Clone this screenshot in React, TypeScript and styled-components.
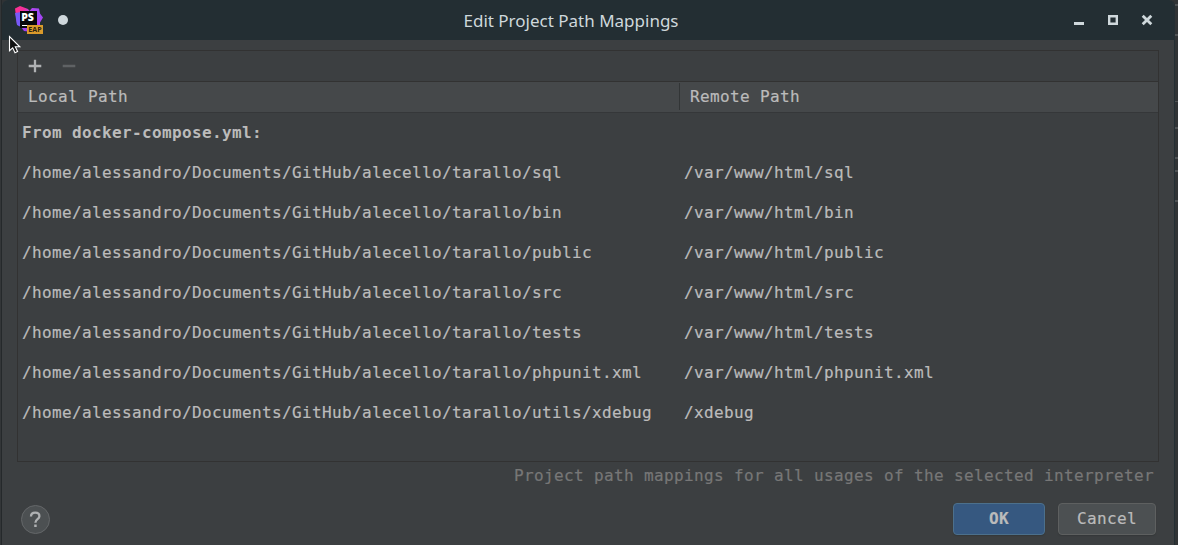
import React from "react";
import styled, { createGlobalStyle } from "styled-components";

const GlobalStyle = createGlobalStyle`
  * { box-sizing: border-box; }
  html, body { margin: 0; padding: 0; background: #323537; }
  body { overflow: hidden; }
`;

const Desktop = styled.div`
  position: relative;
  display: flex;
  width: 1178px;
  height: 545px;
  background: #303335;
  overflow: hidden;
  font-family: "DejaVu Sans Mono", "Liberation Mono", monospace;
  font-size: 16px;
  letter-spacing: 0.368px;
  color: #bbbbbb;
`;

const LeftEdge = styled.div`
  width: 2px;
  background: linear-gradient(90deg, #333638 50%, #25292b 50%);
`;

const RightEdge = styled.div`
  display: flex;
  flex-direction: column;
  width: 3px;
`;

const EditorMark = styled.i<{ $gap: number; $faint?: boolean }>`
  height: ${(p) => (p.$faint ? 1 : 2)}px;
  background: #4f5254;
  margin-top: ${(p) => p.$gap}px;
`;

const Window = styled.div`
  display: flex;
  flex-direction: column;
  width: 1173px;
  background: #3c3f41;
  border-radius: 6px 6px 0 0;
  border-right: 1px solid #232e33;
  overflow: hidden;
`;

const TitleBar = styled.header`
  display: grid;
  grid-template-columns: 130px 1fr 164px;
  align-items: center;
  height: 40px;
  flex: none;
  background: #232e33;
`;

const TitleLeft = styled.div`
  display: flex;
  align-items: center;
  gap: 14px;
  padding-left: 12px;
`;

const Dot = styled.span`
  width: 10px;
  height: 10px;
  border-radius: 50%;
  background: #cfd8dc;
`;

const Title = styled.h1`
  margin: 0;
  padding: 0;
  text-align: center;
  font: 400 17px "Noto Sans", sans-serif;
  letter-spacing: 0;
  color: #cfd8dc;
  white-space: nowrap;
`;

const WindowControls = styled.div`
  display: flex;
  justify-content: flex-end;
  gap: 22px;
  padding-right: 21px;
`;

const Body = styled.main`
  display: flex;
  flex-direction: column;
  flex: 1;
  padding: 10px 15px 0;
  -webkit-text-stroke: 0.2px currentColor;
`;

const Panel = styled.section`
  width: 1142px;
  height: 412px;
  border: 1px solid #323232;
`;

const Toolbar = styled.div`
  display: flex;
  align-items: center;
  gap: 20px;
  height: 31px;
  padding-left: 10px;
  border-bottom: 1px solid #323232;
`;

const TableHead = styled.div`
  display: grid;
  grid-template-columns: 662px 1fr;
  height: 31px;
  padding: 1px 0 2px;
  background: #45484a;
  border-bottom: 1px solid #353739;
`;

const HeadCell = styled.div<{ $divided?: boolean }>`
  display: flex;
  align-items: center;
  padding-left: 10px;
  border-right: ${(p) => (p.$divided ? "1px solid #323536" : "none")};
`;

const Row = styled.div<{ $bold?: boolean }>`
  display: grid;
  grid-template-columns: 662px 1fr;
  align-items: center;
  height: 40px;
  padding: 0 0 2px 4px;
  font-weight: ${(p) => (p.$bold ? 700 : 400)};
  -webkit-text-stroke-width: ${(p) => (p.$bold ? 0 : 0.2)}px;
  white-space: nowrap;
`;

const Hint = styled.p`
  margin: 0;
  height: 29px;
  line-height: 27px;
  padding-right: 5px;
  text-align: right;
  width: 1142px;
  color: #777777;
`;

const Footer = styled.footer`
  display: flex;
  align-items: center;
  gap: 13px;
  width: 1142px;
  height: 32px;
  margin-top: 12px;
  padding: 0 3px 0 4px;
`;

const HelpButton = styled.button`
  display: grid;
  place-items: center;
  width: 29px;
  height: 29px;
  padding: 0;
  margin: 1px auto 0 0;
  border: 1px solid #646769;
  border-radius: 50%;
  background: #4c5052;
`;

const Button = styled.button<{ $primary?: boolean }>`
  width: ${(p) => (p.$primary ? 92 : 98)}px;
  height: 32px;
  padding: 0 0 2px;
  border: 1px solid ${(p) => (p.$primary ? "#4c708c" : "#5e6060")};
  border-radius: 4px;
  background: ${(p) => (p.$primary ? "#365880" : "#4c5052")};
  box-shadow: 0 1px 1px #35383a;
  font: inherit;
  font-weight: ${(p) => (p.$primary ? 700 : 400)};
  letter-spacing: inherit;
  color: #bbbbbb;
`;

const Pointer = styled.svg`
  position: absolute;
  left: 8px;
  top: 35px;
`;

const Logo = () => (
  <svg width="30" height="30" viewBox="0 0 30 30">
    <defs>
      <linearGradient id="shell" x1="0" y1="0" x2="1" y2="0.7">
        <stop offset="0" stopColor="#ff318c" />
        <stop offset="0.28" stopColor="#f2309c" />
        <stop offset="0.45" stopColor="#b345f1" />
        <stop offset="0.75" stopColor="#9b4cf8" />
        <stop offset="1" stopColor="#b03df0" />
      </linearGradient>
    </defs>
    <path d="M1 3.500 6 1l8 3 1.500 2 2.500-3 7 .5 1 5 3 4-3 5v6H13l-6-2-4-2z" fill="url(#shell)" />
    <path d="M1 8l6-1v15l-4-2z" fill="#765af8" />
    <path d="M7 22h7v4.500l-4-.5z" fill="#a13df2" />
    <rect x="6" y="6" width="17" height="17" fill="#08080c" />
    <rect x="8" y="20" width="5" height="1" fill="#fff" />
    <text x="7.200" y="16" fontFamily="Open Sans, sans-serif" fontWeight="800" fontSize="10.500" letterSpacing="0" fill="#fff">PS</text>
    <rect x="13" y="20" width="16" height="9" fill="#d99a2b" />
    <text x="14.200" y="27.300" fontFamily="Open Sans, sans-serif" fontWeight="700" fontSize="7" letterSpacing="0" textLength="13.500" fill="#2c2210">EAP</text>
  </svg>
);

const mappings = [
  ["sql", "/var/www/html/sql"],
  ["bin", "/var/www/html/bin"],
  ["public", "/var/www/html/public"],
  ["src", "/var/www/html/src"],
  ["tests", "/var/www/html/tests"],
  ["phpunit.xml", "/var/www/html/phpunit.xml"],
  ["utils/xdebug", "/xdebug"],
];
const root = "/home/alessandro/Documents/GitHub/alecello/tarallo/";

export default function App() {
  return (
    <>
      <GlobalStyle />
      <Desktop>
        <LeftEdge />
        <Window>
          <TitleBar>
            <TitleLeft>
              <Logo />
              <Dot />
            </TitleLeft>
            <Title>Edit Project Path Mappings</Title>
            <WindowControls>
              <svg width="12" height="12" viewBox="0 0 12 12"><path d="M1 9.5h10" stroke="#cfd8dc" strokeWidth="3" /></svg>
              <svg width="12" height="12" viewBox="0 0 12 12"><path d="M2.200 2.200h7.600v7.600h-7.600z" fill="none" stroke="#cfd8dc" strokeWidth="2.400" /></svg>
              <svg width="12" height="12" viewBox="0 0 12 12"><path d="M1.700 1.700l8.600 8.600M10.300 1.700l-8.600 8.600" stroke="#cfd8dc" strokeWidth="2.800" /></svg>
            </WindowControls>
          </TitleBar>
          <Body>
            <Panel>
              <Toolbar>
                <svg width="14" height="14" viewBox="0 0 14 14"><path d="M7 .7v12.600M.7 7h12.600" stroke="#afb1b3" strokeWidth="2.300" /></svg>
                <svg width="14" height="14" viewBox="0 0 14 14"><path d="M.7 7h12.600" stroke="#5f6264" strokeWidth="2.300" /></svg>
              </Toolbar>
              <TableHead>
                <HeadCell $divided>Local Path</HeadCell>
                <HeadCell>Remote Path</HeadCell>
              </TableHead>
              <Row $bold>From docker-compose.yml:</Row>
              {mappings.map(([path, remote]) => (
                <Row key={path}>
                  <span>{root + path}</span>
                  <span>{remote}</span>
                </Row>
              ))}
            </Panel>
            <Hint>Project path mappings for all usages of the selected interpreter</Hint>
            <Footer>
              <HelpButton aria-label="Help">
                <svg width="13" height="17" viewBox="0 0 13 17">
                  <path d="M2 5.500C2 3 3.800 1.700 6.200 1.700s4.200 1.300 4.200 3.500C10.400 8.200 6.400 8.100 6.400 11.700" fill="none" stroke="#afb1b3" strokeWidth="2.300" />
                  <path d="M5.200 13.500h2.500v2.500h-2.500z" fill="#afb1b3" />
                </svg>
              </HelpButton>
              <Button $primary>OK</Button>
              <Button>Cancel</Button>
            </Footer>
          </Body>
        </Window>
        <RightEdge>
          <EditorMark $gap={4} />
          <EditorMark $gap={28} />
          <EditorMark $gap={65} $faint />
          <EditorMark $gap={25} />
          <EditorMark $gap={28} />
          <EditorMark $gap={11} />
          <EditorMark $gap={28} />
        </RightEdge>
        <Pointer width="14" height="20" viewBox="0 0 14 20">
          <path d="M1.500 1.500v14.200l3.200-2.900 2.300 5 2.600-1.200-2.300-4.800h4.500z" fill="#111" stroke="#fff" strokeWidth="1.100" />
        </Pointer>
      </Desktop>
    </>
  );
}
